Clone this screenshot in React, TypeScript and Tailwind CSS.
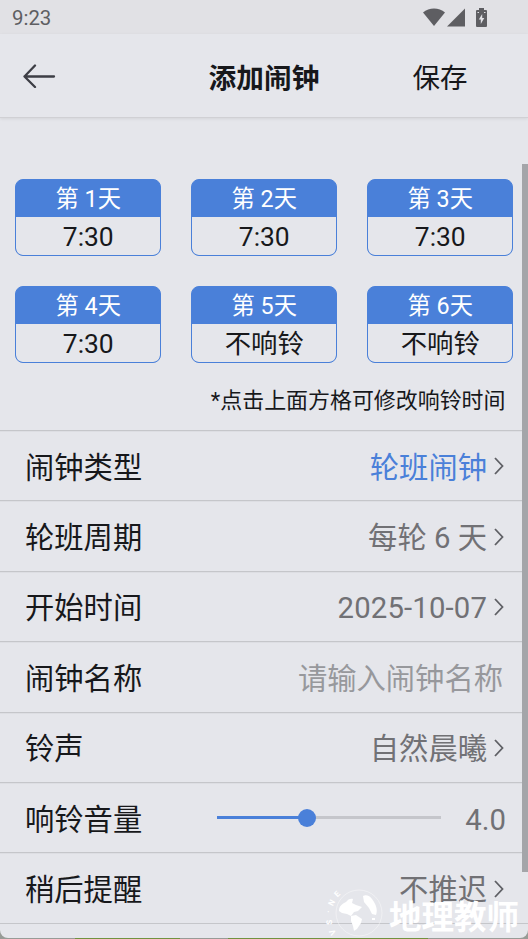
import type { ReactNode } from "react";

const days = [
  { label: "第 1天", value: "7:30" },
  { label: "第 2天", value: "7:30" },
  { label: "第 3天", value: "7:30" },
  { label: "第 4天", value: "7:30" },
  { label: "第 5天", value: "不响铃" },
  { label: "第 6天", value: "不响铃" },
];

function StatusBar() {
  return (
    <div className="flex h-[34px] items-center justify-between bg-[#e1e1e5] pr-[40px] pl-3 text-[#5e5e62]">
      <span className="pt-[3px] text-[20.400px] leading-none">9:23</span>
      <div className="flex items-center">
        <svg width="22" height="19" viewBox="0 0 22 19" fill="currentColor">
          <path d="M11 18 0 4.500C6-1 16-1 22 4.500Z" />
        </svg>
        <svg className="ml-0.5" width="19" height="19" viewBox="0 0 19 19" fill="currentColor">
          <path d="M0 18.5 18 .5v18Z" />
        </svg>
        <svg className="mr-px ml-[10px]" width="11" height="19" viewBox="0 0 11 19">
          <path fill="currentColor" d="M3 0h5v2h2q1 0 1 1v15q0 1-1 1H1q-1 0-1-1V3q0-1 1-1h2Z" />
          <path fill="#e1e1e5" d="M1.500 4h1.500v1H1.500zM8 4h1.500v1H8zM6.200 6 2.800 11.500h2v4.500L8.300 10H6.200Z" />
        </svg>
      </div>
    </div>
  );
}

function Header() {
  return (
    <header className="grid h-[84px] grid-cols-3 items-center border-b border-[#d0d0d4] shadow-[0_1px_3px_rgba(0,0,0,0.08)]">
      <button className="ml-[23px] w-8">
        <svg width="33" height="24" viewBox="0 0 33 24" fill="none" stroke="#3d3e45" strokeWidth="2.300" strokeLinecap="round" strokeLinejoin="round">
          <path d="M12 1.500 1.500 12.500 12 23M1.500 12.500H31" />
        </svg>
      </button>
      <h1 className="pt-[7px] text-center text-[27.700px] font-bold whitespace-nowrap">添加闹钟</h1>
      <button className="pt-1.5 text-center text-[27.500px]">保存</button>
    </header>
  );
}

function DayCard({ label, value }: { label: string; value: string }) {
  return (
    <div className="h-[77px] overflow-hidden rounded-[8px] border-[1.500px] border-[#4a80d9] bg-[#4a80d9]">
      <div className="flex h-[37px] items-center justify-center pt-[3px] pl-px text-[23.300px] leading-none text-white">
        {label}
      </div>
      <div className="flex h-[38px] items-center justify-center rounded-b-[6px] bg-[#e5e6eb] pt-[3px] pl-px text-[26.400px] leading-none">
        {value}
      </div>
    </div>
  );
}

function Chevron() {
  return (
    <svg className="mt-px ml-[7px]" width="10" height="18" viewBox="0 0 10 18" fill="none" stroke="#5f6065" strokeWidth="1.800">
      <path d="M1 1 8.500 9 1 17" />
    </svg>
  );
}

function Row({ label, children }: { label: string; children: ReactNode }) {
  return (
    <div className="flex h-[70.400px] items-center justify-between border-t border-[#c5c6ca] pr-[24px] pl-[25px] text-[29.300px] leading-none shadow-[inset_0_1px_0_rgba(0,0,0,0.03)]">
      <span className="pt-[5px]">{label}</span>
      <div className="flex items-center text-[#717175]">{children}</div>
    </div>
  );
}

function Volume() {
  return (
    <div className="-mr-0.5 flex items-center">
      <div className="relative mr-6 h-[3px] w-[224px] bg-[#c5c6cb]">
        <div className="h-full w-[90px] bg-[#4a80d9]" />
        <div className="absolute -top-[7.500px] left-[81px] h-[18px] w-[18px] rounded-full bg-[#4a80d9]" />
      </div>
      <span className="pt-[5px]">4.0</span>
    </div>
  );
}

function Watermark() {
  return (
    <div className="absolute right-[9px] bottom-0 flex items-end text-white">
      <svg className="overflow-visible" width="64" height="52" viewBox="-2 0 64 52" fill="currentColor">
        <path d="M12 25c0-5 3-7 7-9 2-3 5-4 7-3l-1 4 4 2 6 2-4 4-4 1-3 4-4-2-5-1Z" />
        <path d="M36 10c3-2 7 0 9 3 4 5 6 11 4 16l-4-1-3-6-5-6ZM24 30l5-1 6 4-1 4-4 6-3 2-1-5-2-5Z" />
        <path d="M45 32h3v2h-3z" />
        <circle cx="32" cy="27" r="23" fill="none" stroke="currentColor" strokeOpacity=".4" />
        <g fontSize="8" fontWeight="700" textAnchor="middle">
          <text transform="translate(12 10) rotate(-45)">E</text>
          <text transform="translate(7 18) rotate(-62)">N</text>
          <text transform="translate(4 26) rotate(-80)">·</text>
          <text transform="translate(5 36) rotate(-95)">S</text>
          <text transform="translate(8 45) rotate(-120)">V</text>
        </g>
      </svg>
      <span className="text-[32.500px] leading-[40px] font-bold">地理教师</span>
    </div>
  );
}

export default function App() {
  return (
    <div className="h-[939px] overflow-hidden bg-[#979b96]">
      <div className="relative h-[938px] overflow-hidden rounded-b-[8px] bg-[#e5e6eb] font-[Roboto,'Noto_Sans_CJK_SC',sans-serif] text-[#17181b]">
        <StatusBar />
        <Header />
        <main>
          <div className="grid grid-cols-3 gap-[29.500px] pt-[61px] pr-[15px] pl-[14.500px]">
            {days.map((day) => (
              <DayCard key={day.label} {...day} />
            ))}
          </div>
          <p className="flex h-[67.500px] items-center justify-end pt-[11px] pr-[22.500px] text-[21.950px]">
            *点击上面方格可修改响铃时间
          </p>
          <Row label="闹钟类型">
            <span className="pt-[5px] text-[#4a80d9]">轮班闹钟</span>
            <Chevron />
          </Row>
          <Row label="轮班周期">
            <span className="pt-[5px]">每轮 6 天</span>
            <Chevron />
          </Row>
          <Row label="开始时间">
            <span className="pt-[5px] tracking-[0.150px]">2025-10-07</span>
            <Chevron />
          </Row>
          <Row label="闹钟名称">
            <span className="pt-[5px] pr-px text-[#97989c]">请输入闹钟名称</span>
          </Row>
          <Row label="铃声">
            <span className="pt-[5px]">自然晨曦</span>
            <Chevron />
          </Row>
          <Row label="响铃音量">
            <Volume />
          </Row>
          <Row label="稍后提醒">
            <span className="pt-[5px]">不推迟</span>
            <Chevron />
          </Row>
          <div className="h-5 border-t border-[#c5c6ca]" />
        </main>
        <div className="absolute top-[164px] right-0 h-[708px] w-[6px] bg-[#a4a5a9]" />
        <Watermark />
      </div>
      {/* sliver of the banner below the dialog */}
      <div className="flex h-px gap-12 pl-[75px]">
        <div className="w-[105px] bg-[#71923f]" />
        <div className="w-[200px] bg-[#71923f]" />
      </div>
    </div>
  );
}
